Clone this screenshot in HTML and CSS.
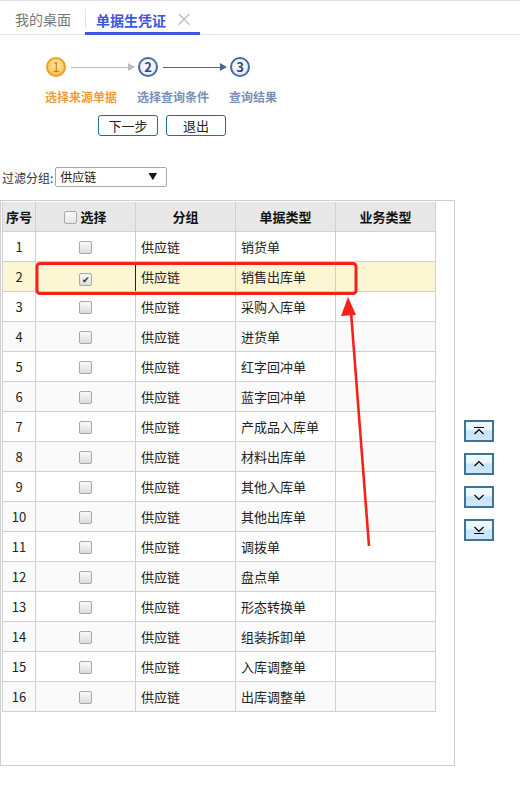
FILE: index.html
```html
<!DOCTYPE html>
<html lang="zh-CN">
<head>
  <meta charset="UTF-8">
  <title>单据生凭证</title>
  <link rel="stylesheet" href="styles.css">
</head>
<body>
  <div class="tabs">
    <span class="tab">我的桌面</span>
    <span class="tab active">单据生凭证<span class="close">×</span></span>
  </div>

  <div class="wizard">
    <div class="steps">
      <div class="step">
        <div class="step-head">
          <span class="circle cur">1</span>
          <span class="arrow gray"></span>
        </div>
        <div class="step-label cur">选择来源单据</div>
      </div>
      <div class="step">
        <div class="step-head">
          <span class="circle">2</span>
          <span class="arrow"></span>
        </div>
        <div class="step-label">选择查询条件</div>
      </div>
      <div class="step">
        <div class="step-head">
          <span class="circle">3</span>
        </div>
        <div class="step-label">查询结果</div>
      </div>
    </div>
    <div class="wizard-buttons">
      <button class="btn">下一步</button>
      <button class="btn">退出</button>
    </div>
  </div>

  <div class="filtro">
    <label>过滤分组:</label>
    <div class="select">供应链<span class="caret">▼</span></div>
  </div>

  <div class="main">
    <div class="grid-box">
      <table class="grid">
        <thead>
          <tr>
            <th class="c-no">序号</th>
            <th class="c-chk"><span class="chk"></span>选择</th>
            <th class="c-grp">分组</th>
            <th class="c-type">单据类型</th>
            <th class="c-biz">业务类型</th>
          </tr>
        </thead>
        <tbody id="linhas"></tbody>
      </table>
    </div>
    <div class="move-buttons">
      <button class="mv"><svg width="12" height="8" viewBox="0 0 12 8"><path d="M1 0.5H11M1.5 7L6 2.5L10.5 7" fill="none" stroke="#000" stroke-width="1.2"/></svg></button>
      <button class="mv"><svg width="12" height="8" viewBox="0 0 12 8"><path d="M1.5 6L6 1.5L10.5 6" fill="none" stroke="#000" stroke-width="1.2"/></svg></button>
      <button class="mv"><svg width="12" height="8" viewBox="0 0 12 8"><path d="M1.5 2L6 6.5L10.5 2" fill="none" stroke="#000" stroke-width="1.2"/></svg></button>
      <button class="mv"><svg width="12" height="8" viewBox="0 0 12 8"><path d="M1.5 1L6 5.5L10.5 1M1 7.5H11" fill="none" stroke="#000" stroke-width="1.2"/></svg></button>
    </div>
  </div>

  <!-- marcação em vermelho sobre a linha selecionada -->
  <svg class="marca" width="520" height="786" viewBox="0 0 520 786">
    <rect x="37" y="263.5" width="319" height="30" rx="3" fill="none" stroke="#f5221b" stroke-width="3"/>
    <path d="M369 546 L351 312" stroke="#f5221b" stroke-width="2.6" fill="none"/>
    <path d="M348 297 L341 316 L356 315 Z" fill="#f5221b"/>
  </svg>

  <script>
    const tipos = [
      "销货单", "销售出库单", "采购入库单", "进货单", "红字回冲单", "蓝字回冲单",
      "产成品入库单", "材料出库单", "其他入库单", "其他出库单", "调拨单", "盘点单",
      "形态转换单", "组装拆卸单", "入库调整单", "出库调整单"
    ];

    const tbody = document.getElementById("linhas");
    tbody.innerHTML = tipos.map((t, i) => {
      const sel = i === 1;
      return `<tr class="${sel ? "sel" : ""}">
        <td class="c-no">${i + 1}</td>
        <td class="c-chk"><span class="chk${sel ? " on" : ""}">${sel ? "✔" : ""}</span></td>
        <td class="c-grp">供应链</td>
        <td class="c-type">${t}</td>
        <td class="c-biz"></td>
      </tr>`;
    }).join("");
  </script>
</body>
</html>
```

FILE: styles.css
```css
body { margin: 0; font-family: "Noto Sans CJK SC", "Microsoft YaHei", sans-serif; font-size: 13px; color: #222; background: #fff; position: relative; width: 520px; height: 786px; overflow: hidden; }

.tabs { display: flex; align-items: flex-end; height: 33px; border-top: 1px solid #e2e2e2; border-bottom: 1px solid #e6e6e6; }
.tab { font-size: 14px; color: #777; padding: 0 14px 0 15px; box-sizing: border-box; border-right: 1px solid #e4e4e4; height: 19px; line-height: 21px; margin-bottom: 6px; }
.tab.active { color: #3d55e0; font-weight: bold; border-right: 0; border-bottom: 3px solid #3d55e0; margin-bottom: -1px; height: 30px; line-height: 26px; padding: 0 0 0 11px; width: 115px; margin-left: -1px; }
.close { color: #bbb; font-weight: normal; font-size: 18px; margin-left: 9px; }

.wizard { padding: 22px 0 0 45px; }
.steps { display: flex; }
.step { width: 92px; }
.step-head { display: flex; align-items: center; height: 20px; }
.circle { width: 16px; height: 16px; border-radius: 50%; border: 2px solid #4a6aa0; background: radial-gradient(circle at 50% 35%, #ffffff, #dbe7f5); color: #2d4a85; font-weight: bold; font-size: 13px; line-height: 16px; text-align: center; margin-left: 1px; }
.circle.cur { border-color: #f0a020; background: radial-gradient(circle at 50% 35%, #ffe9a8, #f7b740); color: #d97800; font-weight: normal; }
.arrow { position: relative; display: block; width: 58px; height: 1px; background: #4a6590; margin-left: 5px; }
.arrow::after { content: ""; position: absolute; right: -6px; top: -4px; border-left: 7px solid #4a6590; border-top: 4.5px solid transparent; border-bottom: 4.5px solid transparent; }
.arrow.gray { background: #bdbdbd; }
.arrow.gray::after { border-left-color: #bdbdbd; }
.step-label { margin-top: 11px; font-size: 12px; font-weight: bold; color: #7a8fb8; white-space: nowrap; }
.step-label.cur { color: #f39a3a; }

.wizard-buttons { display: flex; gap: 8px; margin: 10px 0 0 53px; }
.btn { width: 60px; height: 21px; padding: 0; border: 1px solid #1e6f97; border-radius: 3px; background: #fff; font-family: inherit; font-size: 13px; color: #222; line-height: 18px; }

.filtro { display: flex; align-items: center; margin: 31px 0 0 2px; height: 20px; }
.filtro label { font-size: 12px; color: #333; margin-right: 2px; }
.select { position: relative; height: 18px; border: 1px solid #a9a9a9; border-radius: 2px; font-size: 12px; line-height: 18px; padding-left: 4px; width: 106px; }
.caret { position: absolute; right: 9px; top: 0; font-size: 9px; color: #111; }

.main { display: flex; margin-top: 13px; }
.grid-box { width: 455px; height: 566px; border: 1px solid #cfcfcf; padding: 1px 0 0 1px; box-sizing: border-box; }
.grid { border-collapse: collapse; width: 434px; table-layout: fixed; }
.grid th, .grid td { border: 1px solid #d0d0d0; height: 30px; padding: 0 5px; box-sizing: border-box; }
.grid th { background: #e8e8e8; font-weight: bold; font-size: 13px; color: #111; text-align: center; height: 29px; }
.grid tr:first-child th { border-top: 0; }
.grid td { font-size: 13px; color: #222; }
.grid tbody tr:nth-child(even) td { background: #fafafa; }
.grid tbody tr.sel td { background: #fdf6d2; }
.grid tbody tr.sel td.c-chk { border-right-color: #222; }
.c-no { width: 33px; text-align: center; }
.c-chk { width: 100px; text-align: center; }
.c-grp, .c-type, .c-biz { width: 100px; }
th.c-no { padding: 0 2px; }

.chk { display: inline-block; width: 11px; height: 11px; border: 1px solid #a8a8a8; border-radius: 2px; background: linear-gradient(#fafafa, #dcdcdc); vertical-align: -2px; font-size: 9px; line-height: 11px; text-align: center; color: #333; }
th .chk { margin-right: 3px; background: linear-gradient(#fafafa, #e6e6e6); }

.move-buttons { display: flex; flex-direction: column; gap: 11px; margin: 220px 0 0 9px; }
.mv { width: 30px; height: 22px; padding: 0; border: 2px solid #3c7498; background: linear-gradient(#f4fbff 0%, #e8f4fd 45%, #c8e3f7 50%, #cfe7f9 100%); display: flex; align-items: center; justify-content: center; }

.marca { position: absolute; left: 0; top: 0; pointer-events: none; }
```
